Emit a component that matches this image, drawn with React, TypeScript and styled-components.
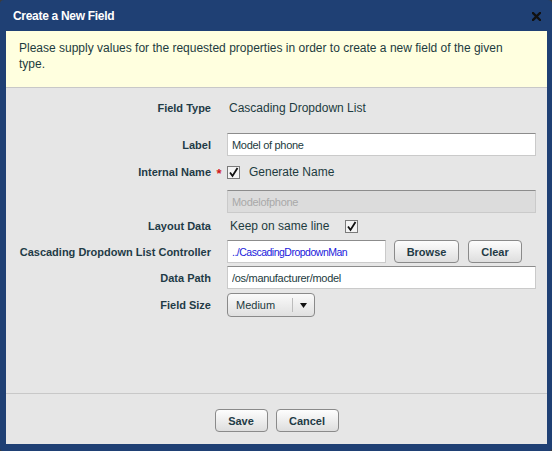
import React from 'react'
import styled, { createGlobalStyle } from 'styled-components'

const Global = createGlobalStyle`
  html, body {
    margin: 0;
    padding: 0;
    background: #3c3c3c;
  }
  body {
    font-family: "Liberation Sans", Arial, sans-serif;
  }
`

const CloseIcon = () => (
  <svg width="9" height="9" viewBox="0 0 9 9">
    <path d="M1 1 L8 8 M8 1 L1 8" stroke="#111" strokeWidth="2.4" strokeLinecap="square" />
  </svg>
)

const Check: React.FC<{ checked?: boolean }> = ({ checked }) => (
  <S.Box>
    {checked && (
      <svg width="11" height="11" viewBox="0 0 11 11">
        <path d="M2 5.5 L4.5 9 L9.5 1" fill="none" stroke="#111" strokeWidth="1.8" />
      </svg>
    )}
  </S.Box>
)

export default function App() {
  return (
    <>
      <Global />
      <S.Dialog>
        <S.TitleBar>
          <S.Title>Create a New Field</S.Title>
          <S.Close>
            <CloseIcon />
          </S.Close>
        </S.TitleBar>
        <S.Body>
          <S.Info>
            Please supply values for the requested properties in order to create a new field of the given
            type.
          </S.Info>
          <S.Form>
            <S.Row $gap={0} $h={20}>
              <S.Label>Field Type</S.Label>
              <span />
              <S.Value>Cascading Dropdown List</S.Value>
            </S.Row>
            <S.Row $gap={15} $h={23}>
              <S.Label>Label</S.Label>
              <span />
              <S.Input defaultValue="Model of phone" />
            </S.Row>
            <S.Row $gap={8} $h={14}>
              <S.Label>Internal Name</S.Label>
              <S.Required>*</S.Required>
              <S.Inline>
                <Check checked />
                <S.Value>Generate Name</S.Value>
              </S.Inline>
            </S.Row>
            <S.Row $gap={12} $h={23}>
              <span />
              <span />
              <S.Input value="Modelofphone" disabled readOnly />
            </S.Row>
            <S.Row $gap={6} $h={14}>
              <S.Label>Layout Data</S.Label>
              <span />
              <S.Inline $gap={16}>
                <S.Value $pad>Keep on same line</S.Value>
                <Check checked />
              </S.Inline>
            </S.Row>
            <S.Row $gap={7} $h={23}>
              <S.Label>Cascading Dropdown List Controller</S.Label>
              <span />
              <S.Inline $gap={8}>
                <S.Input $w={159} $link defaultValue="../CascadingDropdownMan" />
                <S.Button $w={65}>Browse</S.Button>
                <S.Button $w={54} $ml={1}>Clear</S.Button>
              </S.Inline>
            </S.Row>
            <S.Row $gap={3} $h={23}>
              <S.Label>Data Path</S.Label>
              <span />
              <S.Input defaultValue="/os/manufacturer/model" />
            </S.Row>
            <S.Row $gap={4} $h={24}>
              <S.Label>Field Size</S.Label>
              <span />
              <S.Select>
                <S.SelectText>Medium</S.SelectText>
                <S.Arrow>
                  <svg width="7" height="5" viewBox="0 0 7 5">
                    <path d="M0 0 H7 L3.5 5 Z" fill="#111" />
                  </svg>
                </S.Arrow>
              </S.Select>
            </S.Row>
          </S.Form>
          <S.Footer>
            <S.Button $w={53}>Save</S.Button>
            <S.Button $w={63}>Cancel</S.Button>
          </S.Footer>
        </S.Body>
      </S.Dialog>
    </>
  )
}

const S = {
  Dialog: styled.div`
    width: 552px;
    height: 451px;
    box-sizing: border-box;
    background: #1f4074;
    border-radius: 4px 4px 3px 3px;
    padding: 0 5px 7px 6px;
    display: flex;
    flex-direction: column;
  `,

  TitleBar: styled.div`
    height: 31px;
    display: flex;
    align-items: center;
    justify-content: space-between;
    padding: 0 6px 0 7px;
  `,

  Title: styled.h1`
    margin: 0;
    font-size: 12px;
    font-weight: bold;
    color: #fff;
    letter-spacing: -0.3px;
  `,

  Close: styled.span`
    display: flex;
    margin-top: 1px;
  `,

  Body: styled.div`
    flex: 1;
    display: flex;
    flex-direction: column;
    background: #e6e6e6;
  `,

  Info: styled.div`
    background: #ffffdf;
    border-bottom: 1px solid #c8c8c8;
    padding: 9px 36px 15px 13px;
    font-size: 12px;
    line-height: 16px;
    color: #1d3b40;
  `,

  Form: styled.div`
    flex: 1;
    padding: 10px 11px 0 0;
  `,

  Row: styled.div<{ $gap: number; $h: number }>`
    display: grid;
    grid-template-columns: 205px 16px 1fr;
    align-items: center;
    margin-top: ${(p) => p.$gap}px;
    height: ${(p) => p.$h}px;
  `,

  Label: styled.label`
    text-align: right;
    font-size: 11px;
    font-weight: bold;
    color: #1f3b46;
    white-space: nowrap;
  `,

  Required: styled.span`
    color: #d01818;
    font-size: 13px;
    font-weight: bold;
    text-align: center;
    line-height: 1;
    padding-top: 3px;
  `,

  Value: styled.span<{ $pad?: boolean }>`
    font-size: 12px;
    color: #1d3b40;
    padding-left: ${(p) => (p.$pad ? 3 : 2)}px;
    white-space: nowrap;
  `,

  Inline: styled.div<{ $gap?: number }>`
    display: flex;
    align-items: center;
    gap: ${(p) => p.$gap ?? 7}px;
  `,

  Box: styled.span`
    width: 13px;
    height: 13px;
    box-sizing: border-box;
    border: 1px solid #7a7a7a;
    background: #f4f4f4;
    display: flex;
    align-items: center;
    justify-content: center;
  `,

  Input: styled.input<{ $w?: number; $link?: boolean }>`
    box-sizing: border-box;
    width: ${(p) => (p.$w ? `${p.$w}px` : '100%')};
    height: 23px;
    margin: 0;
    padding: 0 4px;
    border: 1px solid #cacaca;
    border-top-color: #8c8c8c;
    background: #fff;
    font-family: "Liberation Sans", Arial, sans-serif;
    font-size: ${(p) => (p.$link ? 10.5 : 11)}px;
    letter-spacing: ${(p) => (p.$link ? -0.5 : -0.3)}px;
    color: ${(p) => (p.$link ? '#1a1adb' : '#1d3b40')};
    outline: none;

    &:disabled {
      background: #dcdcdc;
      color: #a9a9a9;
    }
  `,

  Button: styled.button<{ $w: number; $ml?: number }>`
    box-sizing: border-box;
    width: ${(p) => p.$w}px;
    height: 23px;
    margin: 0 0 0 ${(p) => p.$ml ?? 0}px;
    padding: 0;
    border: 1px solid #8a8a8a;
    border-radius: 4px;
    background: linear-gradient(#fdfdfd, #dedede);
    font-family: "Liberation Sans", Arial, sans-serif;
    font-size: 11px;
    font-weight: bold;
    color: #1f3b46;
  `,

  Select: styled.div`
    box-sizing: border-box;
    width: 88px;
    height: 24px;
    display: flex;
    align-items: stretch;
    border: 1px solid #8a8a8a;
    border-radius: 4px;
    background: linear-gradient(#fafafa, #e0e0e0);
  `,

  SelectText: styled.span`
    flex: 1;
    display: flex;
    align-items: center;
    padding-left: 8px;
    font-size: 11px;
    color: #1d3b40;
    border-right: 1px solid #bcbcbc;
    margin: 4px 0;
  `,

  Arrow: styled.span`
    width: 21px;
    display: flex;
    align-items: center;
    justify-content: center;
  `,

  Footer: styled.div`
    border-top: 1px solid #c8c8c8;
    display: flex;
    justify-content: center;
    gap: 8px;
    padding: 15px 0 12px;
  `,
}
